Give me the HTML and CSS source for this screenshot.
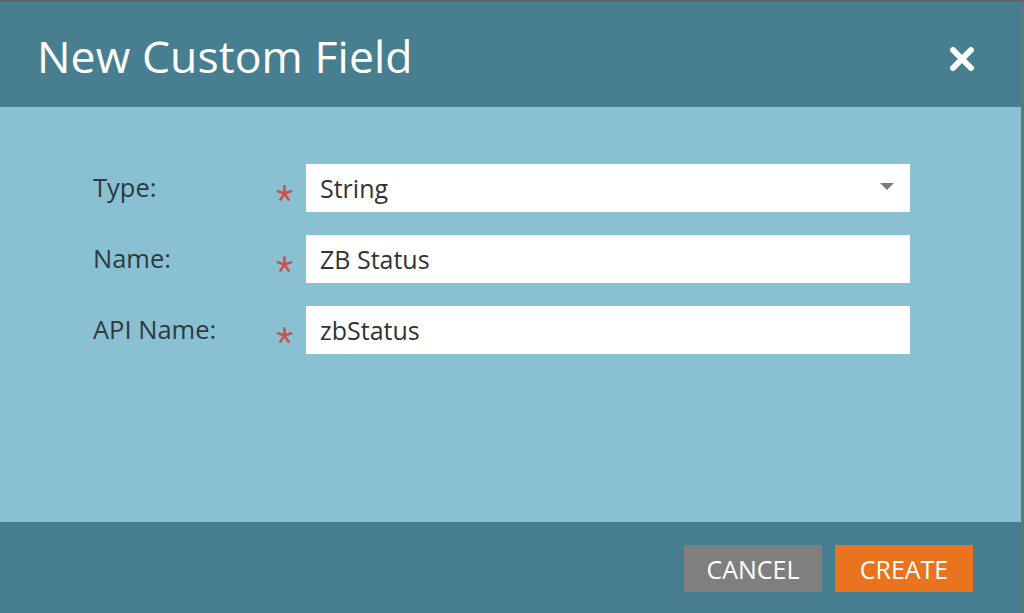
FILE: index.html
```html
<!DOCTYPE html>
<html lang="en">
  <head>
    <meta charset="UTF-8" />
    <meta name="viewport" content="width=device-width, initial-scale=1.0" />
    <title>New Custom Field</title>
    <link rel="stylesheet" href="styles.css">
  </head>
  <body>
    <div class="dialog">
      <!-- header -->
      <div class="dialog-header">
        <h1>New Custom Field</h1>
        <button class="close" title="Close">
          <svg width="26" height="26" viewBox="0 0 26 26">
            <path d="M4 4 L22 22 M22 4 L4 22" stroke="#fff" stroke-width="6" stroke-linecap="round" />
          </svg>
        </button>
      </div>

      <!-- form -->
      <div class="dialog-body">
        <div class="field">
          <label for="type">Type:</label>
          <span class="required">
            <svg width="19" height="19" viewBox="0 0 16 16">
              <path d="M8 1 V8 M8 8 L1.5 5.8 M8 8 L14.5 5.8 M8 8 L4 14 M8 8 L12 14" stroke="#c9524f" stroke-width="2.2" />
            </svg>
          </span>
          <div class="select" id="type">
            <span>String</span>
            <span class="caret"></span>
          </div>
        </div>

        <div class="field">
          <label for="name">Name:</label>
          <span class="required">
            <svg width="19" height="19" viewBox="0 0 16 16">
              <path d="M8 1 V8 M8 8 L1.5 5.8 M8 8 L14.5 5.8 M8 8 L4 14 M8 8 L12 14" stroke="#c9524f" stroke-width="2.2" />
            </svg>
          </span>
          <input type="text" id="name" value="ZB Status" />
        </div>

        <div class="field">
          <label for="api">API Name:</label>
          <span class="required">
            <svg width="19" height="19" viewBox="0 0 16 16">
              <path d="M8 1 V8 M8 8 L1.5 5.8 M8 8 L14.5 5.8 M8 8 L4 14 M8 8 L12 14" stroke="#c9524f" stroke-width="2.2" />
            </svg>
          </span>
          <input type="text" id="api" value="zbStatus" />
        </div>
      </div>

      <!-- buttons -->
      <div class="dialog-footer">
        <button class="btn btn-cancel">CANCEL</button>
        <button class="btn btn-create">CREATE</button>
      </div>
    </div>
  </body>
</html>
```

FILE: styles.css
```css
/* page */
body {
  margin: 0;
  font-family: 'Open Sans', 'Noto Sans', sans-serif;
  background: #5c666a;
}

.dialog {
  height: 611px;
  border-top: 2px solid #5c666a;
  border-right: 3px solid #66757b;
  display: flex;
  flex-direction: column;
}

/* header */
.dialog-header {
  height: 105px;
  background: #477f91;
  display: flex;
  align-items: center;
  justify-content: space-between;
  padding: 0 46px 0 37px;
}

.dialog-header h1 {
  margin: 2px 0 0;
  color: #fff;
  font-size: 44.5px;
  font-weight: 400;
  letter-spacing: 0.1px;
}

.close {
  background: none;
  border: none;
  padding: 0;
  cursor: pointer;
  display: flex;
  margin-top: 8px;
}

/* form area */
.dialog-body {
  height: 415px;
  background: #89c1d3;
  padding: 57px 0 0 93px;
  box-sizing: border-box;
  display: flex;
  flex-direction: column;
  gap: 23px;
}

.field {
  display: grid;
  grid-template-columns: 180px 33px 604px;
  align-items: center;
  height: 48px;
}

.field label {
  font-size: 25.5px;
  color: #2e3a3f;
  margin-top: -2px;
}

.required {
  display: flex;
  margin: 10px 0 0 2px;
}

.field input,
.select {
  box-sizing: border-box;
  height: 48px;
  width: 604px;
  border: none;
  outline: none;
  background: #fff;
  padding: 0 14px;
  font-family: inherit;
  font-size: 25px;
  color: #333;
}

.select {
  display: flex;
  align-items: center;
  justify-content: space-between;
}

.caret {
  width: 0;
  height: 0;
  border-left: 7px solid transparent;
  border-right: 7px solid transparent;
  border-top: 7px solid #7a7a7a;
  margin-right: 2px;
  margin-bottom: 3px;
}

/* footer */
.dialog-footer {
  flex: 1;
  background: #467e90;
  display: flex;
  justify-content: flex-end;
  align-items: flex-start;
  gap: 13px;
  padding: 23px 48px 0 0;
}

.btn {
  width: 138px;
  height: 47px;
  border: none;
  color: #fff;
  font-family: inherit;
  font-size: 25px;
  cursor: pointer;
}

.btn-cancel {
  background: #7f7f7f;
}

.btn-create {
  background: #e9731f;
}
```
